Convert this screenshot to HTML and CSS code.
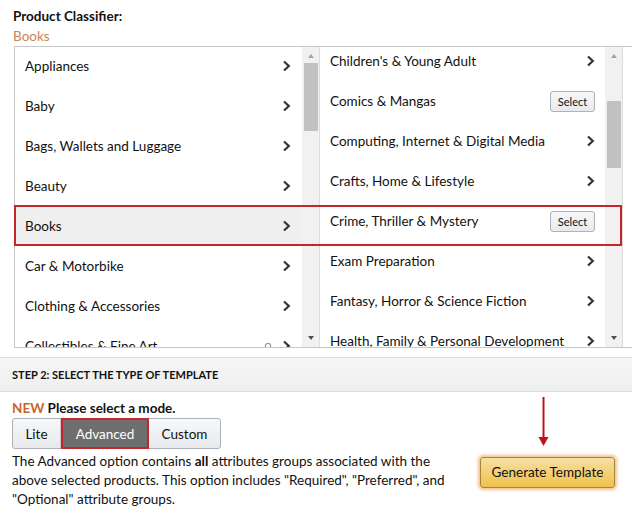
FILE: index.html
```html
<!DOCTYPE html>
<html>
<head>
<meta charset="utf-8">
<link rel="stylesheet" href="styles.css">
</head>
<body>
<div class="head">
  <div class="title">Product Classifier:</div>
  <div class="crumb">Books</div>
</div>

<div class="browser">
  <div class="col col-left">
    <div class="list">
      <div class="row"><span>Appliances</span><svg class="chev" viewBox="0 0 8 12"><path d="M1.5 1.5 L6.3 6 L1.5 10.5"/></svg></div>
      <div class="row"><span>Baby</span><svg class="chev" viewBox="0 0 8 12"><path d="M1.5 1.5 L6.3 6 L1.5 10.5"/></svg></div>
      <div class="row"><span>Bags, Wallets and Luggage</span><svg class="chev" viewBox="0 0 8 12"><path d="M1.5 1.5 L6.3 6 L1.5 10.5"/></svg></div>
      <div class="row"><span>Beauty</span><svg class="chev" viewBox="0 0 8 12"><path d="M1.5 1.5 L6.3 6 L1.5 10.5"/></svg></div>
      <div class="row active"><span>Books</span><svg class="chev" viewBox="0 0 8 12"><path d="M1.5 1.5 L6.3 6 L1.5 10.5"/></svg></div>
      <div class="row"><span>Car &amp; Motorbike</span><svg class="chev" viewBox="0 0 8 12"><path d="M1.5 1.5 L6.3 6 L1.5 10.5"/></svg></div>
      <div class="row"><span>Clothing &amp; Accessories</span><svg class="chev" viewBox="0 0 8 12"><path d="M1.5 1.5 L6.3 6 L1.5 10.5"/></svg></div>
      <div class="row"><span>Collectibles &amp; Fine Art</span><span class="tail"><svg class="spin" viewBox="0 0 8 8"><circle cx="4" cy="4" r="2.6"/></svg><svg class="chev" viewBox="0 0 8 12"><path d="M1.5 1.5 L6.3 6 L1.5 10.5"/></svg></span></div>
    </div>
    <div class="sb">
      <div class="sb-up"></div>
      <div class="sb-thumb thumb-left"></div>
      <div class="sb-down"></div>
    </div>
  </div>

  <div class="col col-right">
    <div class="list list-right">
      <div class="row"><span>Children's &amp; Young Adult</span><svg class="chev" viewBox="0 0 8 12"><path d="M1.5 1.5 L6.3 6 L1.5 10.5"/></svg></div>
      <div class="row"><span>Comics &amp; Mangas</span><span class="select">Select</span></div>
      <div class="row"><span>Computing, Internet &amp; Digital Media</span><svg class="chev" viewBox="0 0 8 12"><path d="M1.5 1.5 L6.3 6 L1.5 10.5"/></svg></div>
      <div class="row"><span>Crafts, Home &amp; Lifestyle</span><svg class="chev" viewBox="0 0 8 12"><path d="M1.5 1.5 L6.3 6 L1.5 10.5"/></svg></div>
      <div class="row"><span>Crime, Thriller &amp; Mystery</span><span class="select">Select</span></div>
      <div class="row"><span>Exam Preparation</span><svg class="chev" viewBox="0 0 8 12"><path d="M1.5 1.5 L6.3 6 L1.5 10.5"/></svg></div>
      <div class="row"><span>Fantasy, Horror &amp; Science Fiction</span><svg class="chev" viewBox="0 0 8 12"><path d="M1.5 1.5 L6.3 6 L1.5 10.5"/></svg></div>
      <div class="row"><span>Health, Family &amp; Personal Development</span><svg class="chev" viewBox="0 0 8 12"><path d="M1.5 1.5 L6.3 6 L1.5 10.5"/></svg></div>
    </div>
    <div class="sb">
      <div class="sb-up"></div>
      <div class="sb-thumb thumb-right"></div>
      <div class="sb-down"></div>
    </div>
  </div>

  <div class="hl"></div>
</div>

<div class="band">STEP 2: SELECT THE TYPE OF TEMPLATE</div>

<div class="section">
  <div class="left">
    <div class="mode-title"><span class="new">NEW</span> Please select a mode.</div>
    <div class="modes">
      <span class="mode m-lite">Lite</span>
      <span class="mode m-adv">Advanced</span>
      <span class="mode m-custom">Custom</span>
    </div>
    <p class="desc">The Advanced option contains <b>all</b> attributes groups associated with the above selected products. This option includes "Required", "Preferred", and "Optional" attribute groups.</p>
  </div>
  <div class="right">
    <svg class="arrow" viewBox="0 0 135 50" width="135" height="50"><line x1="63.5" y1="0" x2="63.5" y2="42" /><polygon points="58.5,40 68.5,40 63.5,49"/></svg>
    <div class="gen">Generate Template</div>
  </div>
</div>
</body>
</html>
```

FILE: styles.css
```css
* { box-sizing: border-box; }
body {
  margin: 0;
  font-family: Lato, "Liberation Sans", sans-serif;
  font-size: 13.5px;
  color: #111;
  background: #fff;
}
.head { padding: 6px 13px 0; }
.title { font-weight: bold; line-height: 20px; }
.crumb { color: #c8845a; line-height: 20px; }

.browser {
  position: relative;
  display: flex;
  height: 302px;
  margin-left: 14px;
  border: 1px solid #c8c8c8;
  border-right: none;
}
.col { display: flex; height: 300px; overflow: hidden; }
.col-left { width: 304px; }
.col-right { width: 304px; border-left: 1px solid #dcdcdc; border-right: 1px solid #dcdcdc; }
.list { flex: 1; overflow: hidden; }
.list .row:first-child { margin-top: -1px; }
.list-right .row:first-child { margin-top: -6px; }
.row {
  height: 40px;
  display: flex;
  align-items: center;
  justify-content: space-between;
  padding: 0 11px 0 10px;
  white-space: nowrap;
}
.list-right .row { padding-right: 10px; }
.row.active { background: #efefef; }
.chev {
  width: 9px;
  height: 12px;
  fill: none;
  stroke: #333;
  stroke-width: 2.2;
  flex: none;
}
.tail { display: flex; align-items: center; gap: 10px; }
.spin { width: 8px; height: 8px; fill: none; stroke: #999; stroke-width: 1.2; }
.select {
  width: 45px;
  height: 21px;
  line-height: 19px;
  text-align: center;
  font-size: 11px;
  border: 1px solid #adb1b8;
  border-radius: 3px;
  background: linear-gradient(#f7f8fa, #e7e9ec);
  color: #111;
}

.sb {
  width: 17px;
  flex: none;
  background: #f1f1f1;
  display: flex;
  flex-direction: column;
  align-items: center;
}
.sb-up, .sb-down {
  width: 0;
  height: 0;
  border-left: 3.5px solid transparent;
  border-right: 3.5px solid transparent;
}
.sb-up { border-bottom: 4px solid #a3a3a3; margin-top: 7px; }
.sb-down { border-top: 4px solid #505050; margin-top: auto; margin-bottom: 7px; }
.sb-thumb { width: 14px; background: #c1c1c1; }
.thumb-left { margin-top: 5px; height: 68px; }
.thumb-right { margin-top: 43px; height: 67px; }

.hl {
  position: absolute;
  top: 158px;
  left: -1px;
  width: 608px;
  height: 41px;
  border: 2px solid #c8242b;
}

.band {
  margin-top: 9px;
  height: 35px;
  line-height: 33px;
  border-top: 1px solid #dddddd;
  border-bottom: 1px solid #dddddd;
  background: linear-gradient(#f6f6f6, #efefef);
  padding-left: 12px;
  font-size: 11px;
  font-weight: bold;
  color: #111;
}

.section { display: flex; padding: 0 12px; }
.left { width: 440px; }
.mode-title { margin-top: 7px; line-height: 18px; font-weight: bold; }
.new { color: #c8652a; }
.modes {
  margin-top: 1px;
  display: inline-flex;
  height: 31px;
  border: 1px solid #adb1b8;
  border-radius: 3px;
  background: linear-gradient(#f7f8fa, #e7e9ec);
}
.mode { display: flex; align-items: center; justify-content: center; color: #111; }
.m-lite { width: 48px; border-right: 1px solid #c6c8cc; }
.m-adv {
  width: 88px;
  margin: -1px 0;
  background: #6e6e6e;
  color: #fff;
  border: 2px solid #c8242b;
}
.m-custom { width: 71px; }
.desc { margin: 3px 0 0; line-height: 19px; color: #111; }

.right {
  margin-left: 28px;
  width: 135px;
  padding-top: 5px;
  display: flex;
  flex-direction: column;
}
.arrow line { stroke: #c4101a; stroke-width: 2; }
.arrow polygon { fill: #c4101a; }
.gen {
  margin-top: 10px;
  height: 31px;
  line-height: 29px;
  text-align: center;
  border: 1px solid #a88734;
  border-radius: 3px;
  background: linear-gradient(#f7dfa5, #f0c14b);
  box-shadow: 0 0 3px 2px rgba(228, 121, 17, 0.45);
  color: #111;
}
```
